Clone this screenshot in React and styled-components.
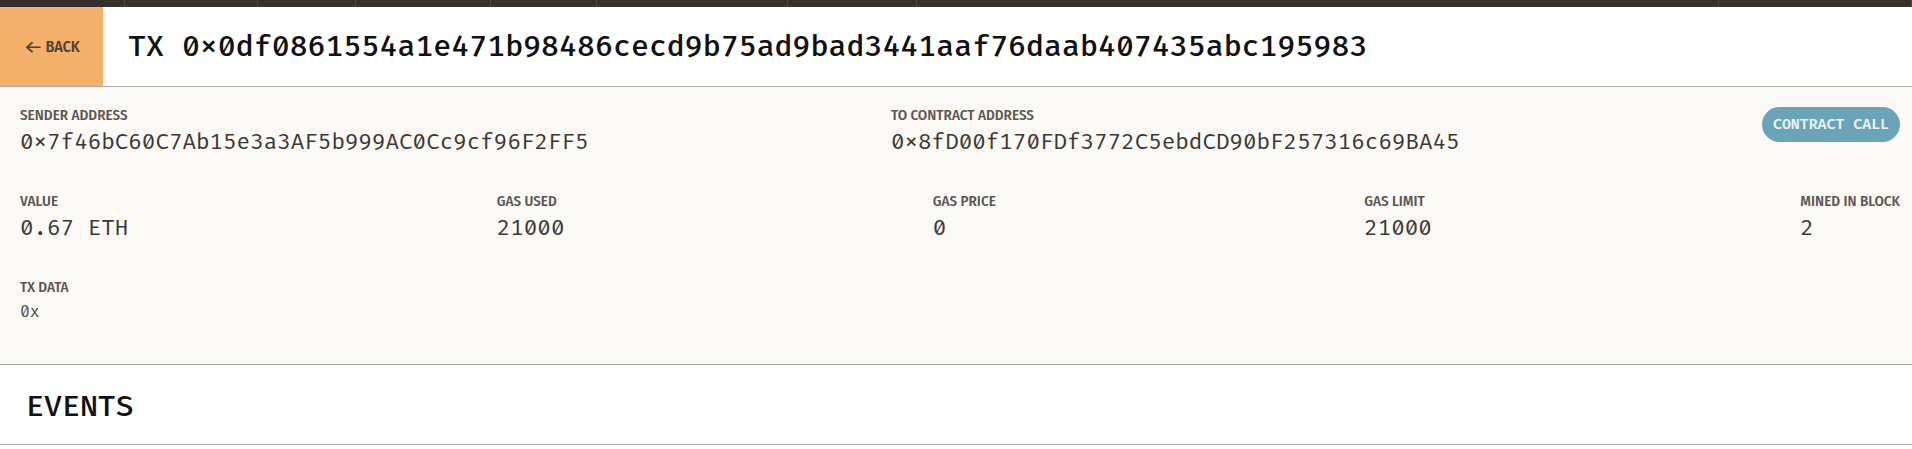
import styled, { createGlobalStyle } from "styled-components";

const Global = createGlobalStyle`
  * { box-sizing: border-box; }
  body {
    margin: 0;
    background: #fff;
    font-family: "Fira Sans Condensed", "Roboto Condensed", sans-serif;
  }
`;

const TopNav = styled.div`
  display: flex;
  height: 7px;
  background: #35302b;
`;

const NavTab = styled.div`
  width: ${(p) => p.$w}px;
  border-right: 1px solid #4a4540;
`;

const Header = styled.header`
  display: flex;
  align-items: stretch;
  height: 80px;
  border-bottom: 1px solid #aaa;
  background: #fff;
`;

const BackButton = styled.button`
  width: 103px;
  border: none;
  background: #f3b06b;
  color: #4d4034;
  font-family: "Fira Sans Condensed", sans-serif;
  font-size: 16px;
  font-weight: 500;
  text-transform: uppercase;
  display: flex;
  align-items: center;
  justify-content: center;
  gap: 4px;
  padding: 0 0 0 2px;
  cursor: pointer;
`;

const Arrow = styled.span`
  font-size: 18px;
  font-weight: 400;
  line-height: 1;
  transform: scaleX(1.25);
`;

const Title = styled.h1`
  margin: 0;
  padding-left: 25px;
  display: flex;
  align-items: center;
  font-family: "Fira Code", "Fira Mono", monospace;
  font-size: 29.2px;
  font-weight: 500;
  color: #111;
`;

const Details = styled.section`
  min-height: 278px;
  padding: 19px 12px 0 20px;
  background: #faf9f5;
  border-bottom: 1px solid #aaa;
`;

const Row = styled.div`
  display: flex;
  justify-content: space-between;
  align-items: flex-start;
  margin-bottom: ${(p) => p.$gap || 0}px;
`;

const Field = styled.div`
  display: flex;
  flex-direction: column;
`;

const Label = styled.div`
  font-family: "Fira Sans Condensed", sans-serif;
  font-size: 15px;
  font-weight: 500;
  line-height: 18px;
  color: #5a5550;
  text-transform: uppercase;
`;

const Value = styled.div`
  font-family: "Fira Code", "Fira Mono", monospace;
  font-size: ${(p) => (p.$small ? 16 : 22)}px;
  line-height: ${(p) => (p.$small ? 22 : 28)}px;
  margin-top: 5px;
  color: ${(p) => (p.$small ? "#55514c" : "#3b3733")};
  white-space: nowrap;
`;

const Badge = styled.div`
  margin-top: 1px;
  height: 35px;
  padding: 0 11px;
  border-radius: 18px;
  background: #6ba4b8;
  color: #eef4f6;
  font-family: "Fira Code", "Fira Mono", monospace;
  font-size: 14.5px;
  font-weight: 600;
  display: flex;
  align-items: center;
  text-transform: uppercase;
  white-space: pre;
`;

const Events = styled.section`
  height: 80px;
  padding: 4px 0 0 26px;
  display: flex;
  align-items: center;
  border-bottom: 1px solid #aaa;
  background: #fff;
`;

const EventsTitle = styled.h2`
  margin: 0;
  font-family: "Fira Code", "Fira Mono", monospace;
  font-size: 29.2px;
  font-weight: 500;
  color: #111;
  text-transform: uppercase;
`;

const tabs = [125, 133, 98, 135, 106, 191, 129, 802, 193];

const tx = {
  hash: "0x0df0861554a1e471b98486cecd9b75ad9bad3441aaf76daab407435abc195983",
  from: "0x7f46bC60C7Ab15e3a3AF5b999AC0Cc9cf96F2FF5",
  to: "0x8fD00f170FDf3772C5ebdCD90bF257316c69BA45",
  stats: [
    ["Value", "0.67 ETH"],
    ["Gas Used", "21000"],
    ["Gas Price", "0"],
    ["Gas Limit", "21000"],
    ["Mined in Block", "2"],
  ],
  data: "0x",
};

export default function App() {
  return (
    <>
      <Global />
      <TopNav>
        {tabs.map((w, i) => (
          <NavTab key={i} $w={w} />
        ))}
      </TopNav>
      <Header>
        <BackButton>
          <Arrow>←</Arrow>
          <span>Back</span>
        </BackButton>
        <Title>TX {tx.hash}</Title>
      </Header>
      <Details>
        <Row $gap={35}>
          <Field>
            <Label>Sender Address</Label>
            <Value>{tx.from}</Value>
          </Field>
          <Field>
            <Label>To Contract Address</Label>
            <Value>{tx.to}</Value>
          </Field>
          <Badge>Contract Call</Badge>
        </Row>
        <Row $gap={35}>
          {tx.stats.map(([label, value]) => (
            <Field key={label}>
              <Label>{label}</Label>
              <Value>{value}</Value>
            </Field>
          ))}
        </Row>
        <Row>
          <Field>
            <Label>TX Data</Label>
            <Value $small>{tx.data}</Value>
          </Field>
        </Row>
      </Details>
      <Events>
        <EventsTitle>Events</EventsTitle>
      </Events>
    </>
  );
}
